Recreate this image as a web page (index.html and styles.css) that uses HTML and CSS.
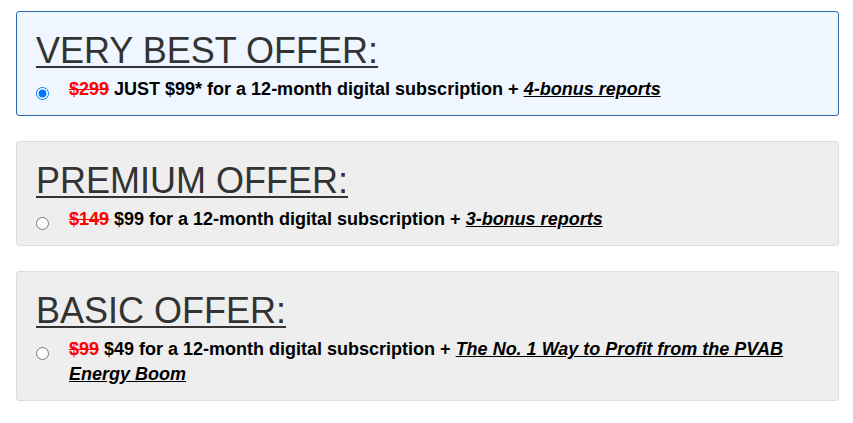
FILE: index.html
```html
<!DOCTYPE html>
<html lang="en">
<head>
  <meta charset="UTF-8">
  <title>Subscription offers</title>
  <link rel="stylesheet" href="styles.css">
</head>
<body>
  <form class="offers">
    <label class="offer best">
      <h2 class="offer-title">VERY BEST OFFER:</h2>
      <span class="offer-row">
        <input type="radio" name="offer" value="best" checked>
        <span class="offer-text"><s class="old">$299</s> JUST $99* for a 12-month digital subscription + <a href="#">4-bonus reports</a></span>
      </span>
    </label>

    <label class="offer">
      <h2 class="offer-title">PREMIUM OFFER:</h2>
      <span class="offer-row">
        <input type="radio" name="offer" value="premium">
        <span class="offer-text"><s class="old">$149</s> $99 for a 12-month digital subscription + <a href="#">3-bonus reports</a></span>
      </span>
    </label>

    <label class="offer">
      <h2 class="offer-title">BASIC OFFER:</h2>
      <span class="offer-row">
        <input type="radio" name="offer" value="basic">
        <span class="offer-text"><s class="old">$99</s> $49 for a 12-month digital subscription + <a href="#">The No. 1 Way to Profit from the PVAB Energy Boom</a></span>
      </span>
    </label>
  </form>
</body>
</html>
```

FILE: styles.css
```css
body {
  margin: 0;
  background: #fff;
  font-family: "Liberation Sans", Arial, sans-serif;
}
.offers {
  display: flex;
  flex-direction: column;
  gap: 25px;
  padding: 11px 14px 0 16px;
}
.offer {
  display: block;
  padding: 18px 20px 13px 19px;
  background: #eeeeee;
  border: 1px solid #dddddd;
  border-radius: 3px;
  cursor: pointer;
}
.offer.best {
  background: #eff6ff;
  border-color: #2b6cb0;
}
.offer-title {
  margin: 0 0 6px;
  font-size: 36px;
  font-weight: normal;
  line-height: 41px;
  color: #333;
  text-decoration: underline;
  text-decoration-thickness: 2px;
  text-underline-offset: 3px;
}
.offer-row {
  display: flex;
  align-items: flex-start;
}
.offer-row input {
  flex: none;
  width: 13px;
  height: 13px;
  margin: 10px 20px 0 0;
}
.offer-text {
  font-size: 18px;
  font-weight: bold;
  line-height: 25px;
  color: #000;
}
.old {
  color: #f00;
}
.offer-text a {
  color: #000;
  font-style: italic;
}
```
